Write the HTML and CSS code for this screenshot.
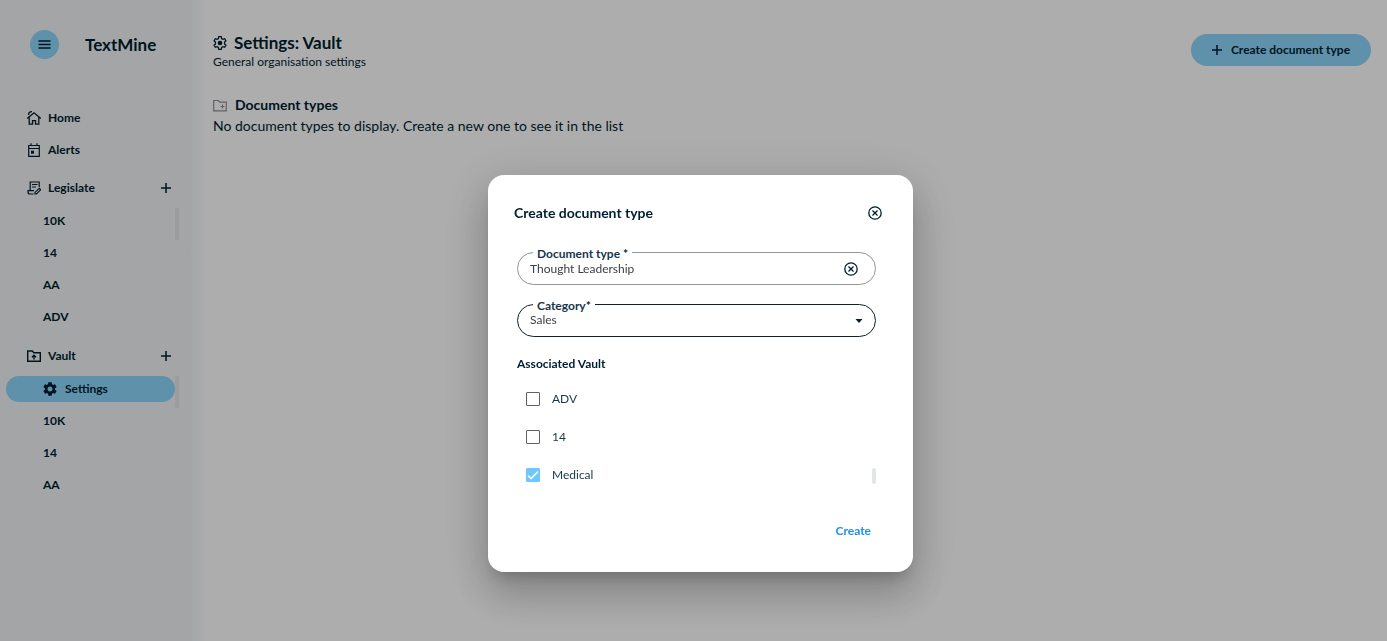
FILE: index.html
```html
<!DOCTYPE html>
<html lang="en">
<head>
    <meta charset="UTF-8">
    <meta name="viewport" content="width=device-width, initial-scale=1.0">
    <title>TextMine - Settings: Vault</title>
    <link rel="stylesheet" href="styles.css">
</head>
<body>
    <div class="app">
        <aside class="sidebar">
            <div class="brand">
                <button class="menu-button" type="button" aria-label="Toggle menu">
                    <svg width="13" height="9" viewBox="0 0 13 9" fill="none" stroke="currentColor" stroke-width="1.3"><path d="M.5 1h12M.5 4.500h12M.5 8h12"/></svg>
                </button>
                <span class="brand-name">TextMine</span>
            </div>

            <nav class="nav">
                <a class="nav-link" href="#home">
                    <svg class="icon" viewBox="1 1 14 14" fill="none" stroke="currentColor" stroke-width="1.3"><path d="M1.200 8.500 8 2.800l6.800 5.700M3.200 7v7.200h3.300v-3.500h3v3.500h3.300V7M2.500 5C2.500 3 4 1.700 6 1.700"/></svg>
                    Home
                </a>
                <a class="nav-link" href="#alerts">
                    <svg class="icon" viewBox="1 1 14 14" fill="none" stroke="currentColor" stroke-width="1.2"><path d="M2.700 3.500h10.600v10.800H2.700zM2.700 6.500h10.600M5 1.300v2.200M11 1.300v2.200"/><path d="M5 8.700h3v3H5z" fill="currentColor" stroke="none"/></svg>
                    Alerts
                </a>

                <div class="nav-group">
                    <div class="nav-head">
                        <a class="nav-link" href="#legislate">
                            <svg class="icon" viewBox="1 1 14 14" fill="none" stroke="currentColor" stroke-width="1.200"><path d="M4.200 10.500V2h9v5M6 4.500h5.500M6 7h4M8 10.700H2v1.300c0 1.400.8 2 2 2h3.500M9 14v-1.600L13.300 8.300l1.400 1.500L10.500 14z"/></svg>
                            Legislate
                        </a>
                        <button class="add-button" type="button" aria-label="Add to Legislate">
                            <svg width="10" height="10" viewBox="0 0 10 10" stroke="currentColor" stroke-width="1.5"><path d="M5 0v10M0 5h10"/></svg>
                        </button>
                    </div>
                    <div class="nav-sub">
                        <a class="sub-link" href="#legislate-10k">10K</a>
                        <a class="sub-link" href="#legislate-14">14</a>
                        <a class="sub-link" href="#legislate-aa">AA</a>
                        <a class="sub-link" href="#legislate-adv">ADV</a>
                        <span class="thumb"></span>
                    </div>
                </div>

                <div class="nav-group">
                    <div class="nav-head">
                        <a class="nav-link" href="#vault">
                            <svg class="icon" viewBox="1 1 14 14" fill="none" stroke="currentColor" stroke-width="1.400"><path d="M1.700 3h4.600l1.500 1.700h6.500v8.600H1.700z"/><path d="M8 11.500V7.500M6 9.200l2-2 2 2"/></svg>
                            Vault
                        </a>
                        <button class="add-button" type="button" aria-label="Add to Vault">
                            <svg width="10" height="10" viewBox="0 0 10 10" stroke="currentColor" stroke-width="1.5"><path d="M5 0v10M0 5h10"/></svg>
                        </button>
                    </div>
                    <div class="nav-sub">
                        <a class="sub-link active" href="#vault-settings">
                            <svg class="icon" viewBox="2 2 20 20" fill="currentColor"><path d="M19.140 12.940c.04-.3.06-.61.06-.94 0-.32-.02-.64-.07-.94l2.030-1.580c.18-.14.23-.41.12-.61l-1.920-3.320c-.12-.22-.37-.29-.59-.22l-2.390.96c-.5-.38-1.030-.7-1.620-.94l-.36-2.540c-.04-.24-.24-.41-.48-.41h-3.840c-.24 0-.43.17-.47.41l-.36 2.540c-.59.24-1.130.57-1.620.94l-2.390-.96c-.22-.08-.47 0-.59.22L2.740 8.870c-.12.21-.08.47.12.61l2.030 1.580c-.05.3-.09.63-.09.94s.02.64.07.94l-2.030 1.580c-.18.14-.23.41-.12.61l1.920 3.320c.12.22.37.29.59.22l2.390-.96c.5.38 1.030.7 1.620.94l.36 2.540c.05.24.24.41.48.41h3.840c.24 0 .44-.17.47-.41l.36-2.540c.59-.24 1.130-.56 1.620-.94l2.390.96c.22.08.47 0 .59-.22l1.920-3.320c.12-.22.07-.47-.12-.61l-2.010-1.580zM12 15.600c-1.980 0-3.600-1.620-3.600-3.600s1.620-3.600 3.600-3.600 3.600 1.620 3.600 3.600-1.620 3.600-3.600 3.600z"/></svg>
                            Settings
                        </a>
                        <a class="sub-link" href="#vault-10k">10K</a>
                        <a class="sub-link" href="#vault-14">14</a>
                        <a class="sub-link" href="#vault-aa">AA</a>
                        <span class="thumb"></span>
                    </div>
                </div>
            </nav>
        </aside>

        <main class="content">
            <header class="page-head">
                <div>
                    <h1 class="page-title">
                        <svg class="icon" viewBox="2 2 20 20" fill="none" stroke="currentColor" stroke-width="1.800"><path d="M10.200 3h3.600l.5 2.600 1.900 1.100 2.500-.9 1.800 3.100-2 1.800v2.600l2 1.800-1.800 3.100-2.500-.9-1.900 1.100-.5 2.600h-3.600l-.5-2.600-1.900-1.100-2.500.9-1.800-3.100 2-1.800v-2.600l-2-1.800 1.800-3.100 2.500.9 1.900-1.100z"/><circle cx="12" cy="12" r="3.300" fill="currentColor" stroke="none"/></svg>
                        Settings: Vault
                    </h1>
                    <p class="page-subtitle">General organisation settings</p>
                </div>
                <button class="create-button" type="button">
                    <svg width="10" height="10" viewBox="0 0 10 10" stroke="currentColor" stroke-width="1.5"><path d="M5 0v10M0 5h10"/></svg>
                    Create document type
                </button>
            </header>

            <section>
                <h2 class="section-title">
                    <svg class="icon folder-icon" viewBox="1 1 14 14" fill="none" stroke="currentColor" stroke-width="1.200"><path d="M1.700 3.500h4.600l1.500 1.700h6.500v8.600H1.700z"/><path d="M10.500 7.500v4M8.500 9.500h4"/></svg>
                    Document types
                </h2>
                <p class="empty-text">No document types to display. Create a new one to see it in the list</p>
            </section>
        </main>
    </div>

    <div class="overlay">
        <div class="modal" role="dialog" aria-modal="true" aria-labelledby="modal-title">
            <div class="modal-head">
                <h2 class="modal-title" id="modal-title">Create document type</h2>
                <button class="icon-button" type="button" aria-label="Close">
                    <svg width="14" height="14" viewBox="0 0 14 14" fill="none" stroke="currentColor" stroke-width="1.3"><circle cx="7" cy="7" r="6.200"/><path d="m4.500 4.500 5 5M9.500 4.500l-5 5"/></svg>
                </button>
            </div>

            <form class="form">
                <div class="field">
                    <label class="field-label" for="doc-type">Document type <span class="star">*</span></label>
                    <input class="field-input" id="doc-type" type="text" value="Thought Leadership">
                    <button class="icon-button" type="button" aria-label="Clear">
                        <svg width="14" height="14" viewBox="0 0 14 14" fill="none" stroke="currentColor" stroke-width="1.3"><circle cx="7" cy="7" r="6.200"/><path d="m4.500 4.500 5 5M9.500 4.500l-5 5"/></svg>
                    </button>
                </div>

                <div class="field focused">
                    <label class="field-label" for="category">Category<span class="star">*</span></label>
                    <select class="field-input" id="category">
                        <option>Sales</option>
                    </select>
                    <svg class="caret" width="8" height="4" viewBox="0 0 8 4" fill="currentColor"><path d="M.5 0h7L4 4z"/></svg>
                </div>

                <fieldset class="vaults">
                    <legend class="vaults-title">Associated Vault</legend>
                    <div class="vault-list">
                        <label class="check-row"><input class="check" type="checkbox"> ADV</label>
                        <label class="check-row"><input class="check" type="checkbox"> 14</label>
                        <label class="check-row"><input class="check" type="checkbox" checked> Medical</label>
                        <span class="list-thumb"></span>
                    </div>
                </fieldset>

                <div class="modal-actions">
                    <button class="text-button" type="button">Create</button>
                </div>
            </form>
        </div>
    </div>
</body>
</html>
```

FILE: styles.css
```css
* {
    box-sizing: border-box;
}

body {
    margin: 0;
    font-family: Lato, "Noto Sans", sans-serif;
    font-size: 12px;
    line-height: 16px;
    color: #001e2f;
    background-color: #fff;
}

h1, h2, p {
    margin: 0;
}

a {
    color: inherit;
    text-decoration: none;
}

button, input, select {
    font: inherit;
    color: inherit;
}

button {
    display: flex;
    align-items: center;
    justify-content: center;
    padding: 0;
    border: 0;
    background: none;
    cursor: pointer;
}

.icon {
    width: 14px;
    height: 14px;
    flex: none;
}

.app {
    display: flex;
    min-height: 100vh;
}

/* Sidebar */
.sidebar {
    width: 205px;
    flex: none;
    font-weight: bold;
    background: linear-gradient(to right, #f1f4f6 190px, #fff 205px);
}

.brand {
    display: flex;
    align-items: center;
    gap: 26px;
    padding: 30px 0 43px 30px;
}

.menu-button {
    width: 29px;
    height: 29px;
    border-radius: 50%;
    background-color: #8cd6fc;
}

.brand-name {
    font-size: 17px;
}

.nav-link {
    display: flex;
    align-items: center;
    gap: 7px;
    height: 32px;
    padding-left: 27px;
}

.nav-group {
    margin-top: 6px;
}

.nav-group + .nav-group {
    margin-top: 4px;
}

.nav-head {
    display: flex;
    align-items: center;
    justify-content: space-between;
    padding-right: 27px;
}

.add-button {
    width: 24px;
    height: 24px;
}

.nav-sub {
    position: relative;
    display: flex;
    flex-direction: column;
    width: 179px;
    padding-top: 4px;
}

.sub-link {
    display: flex;
    align-items: center;
    height: 26px;
    margin: 0 4px 6px 6px;
    padding-left: 37px;
    border-radius: 13px;
}

.sub-link.active {
    gap: 8px;
    background-color: #8cd6fc;
}

.thumb {
    position: absolute;
    top: 4px;
    right: 0;
    width: 4px;
    height: 32px;
    background-color: #e4e7e9;
}

/* Page content */
.content {
    flex: 1;
    padding: 32px 16px 0 8px;
}

.page-head {
    display: flex;
    align-items: flex-start;
    justify-content: space-between;
    margin-bottom: 26px;
}

.page-title {
    display: flex;
    align-items: center;
    gap: 7px;
    font-size: 17px;
    line-height: 22px;
}

.create-button {
    gap: 9px;
    width: 180px;
    height: 32px;
    margin-top: 2px;
    border-radius: 16px;
    font-weight: bold;
    background-color: #8cd6fc;
}

.section-title {
    display: flex;
    align-items: center;
    gap: 8px;
    font-size: 14px;
    line-height: 18px;
}

.folder-icon {
    color: #8a9095;
}

.empty-text {
    margin-top: 3px;
    font-size: 14px;
    line-height: 18px;
}

/* Modal */
.overlay {
    position: fixed;
    inset: 0;
    display: flex;
    align-items: center;
    justify-content: center;
    padding: 106px 0 0 14px;
    background-color: rgba(0, 0, 0, 0.32);
}

.modal {
    width: 425px;
    padding: 26px 26px 29px;
    border-radius: 16px;
    background-color: #fff;
    box-shadow: 0 11px 15px -7px rgba(0, 0, 0, 0.2), 0 24px 38px 3px rgba(0, 0, 0, 0.14), 0 9px 46px 8px rgba(0, 0, 0, 0.12);
}

.modal-head {
    display: flex;
    align-items: center;
    justify-content: space-between;
}

.modal-title {
    font-size: 14px;
    line-height: 24px;
}

.icon-button {
    flex: none;
    width: 24px;
    height: 24px;
}

.form {
    padding: 27px 11px 0 3px;
}

.field {
    position: relative;
    display: flex;
    align-items: center;
    height: 33px;
    margin-bottom: 19px;
    padding: 0 12px;
    border: 1px solid #8f9498;
    border-radius: 17px;
}

.field.focused {
    border-color: #0c2334;
}

.field-label {
    position: absolute;
    top: -7px;
    left: 15px;
    padding: 0 4px;
    font-weight: bold;
    color: #17364b;
    background-color: #fff;
}

.star {
    color: #001e2f;
}

.field-input {
    flex: 1;
    min-width: 0;
    height: 31px;
    padding: 0 0 1px;
    border: 0;
    outline: 0;
    color: #3c4043;
    background: none;
    appearance: none;
}

.caret {
    flex: none;
}

.vaults {
    margin: 0;
    padding: 0;
    border: 0;
}

.vaults-title {
    padding: 0;
    font-weight: bold;
}

.vault-list {
    position: relative;
    padding: 8px 0 12px;
}

.check-row {
    display: flex;
    align-items: center;
    gap: 12px;
    height: 38px;
    padding-left: 9px;
    color: #17364b;
}

.check {
    appearance: none;
    width: 14px;
    height: 14px;
    margin: 0;
    border: 1px solid #5f6368;
    border-radius: 1px;
}

.check:checked {
    border-color: #6cc8ff;
    background: #6cc8ff url("data:image/svg+xml,%3Csvg xmlns='http://www.w3.org/2000/svg' viewBox='0 0 12 12' fill='none' stroke='white' stroke-width='1.6'%3E%3Cpath d='M1 6.500 4 9.500 11 2.500'/%3E%3C/svg%3E") center / 12px no-repeat;
}

.list-thumb {
    position: absolute;
    right: 0;
    bottom: 22px;
    width: 4px;
    height: 16px;
    border-radius: 2px;
    background-color: #e2e6e8;
}

.modal-actions {
    display: flex;
    justify-content: flex-end;
    margin-top: 13px;
    padding-right: 5px;
}

.text-button {
    height: 24px;
    font-weight: bold;
    color: #1e90f5;
}
```
